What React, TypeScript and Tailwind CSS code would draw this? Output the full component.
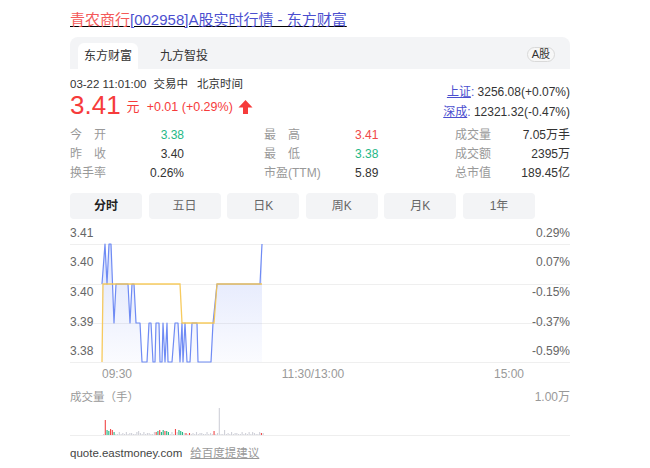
import React from "react";

const FONT = '"Liberation Sans","Noto Sans CJK SC",sans-serif';

const bluePts: [number, number][] = [
  [102, 282], [105, 242], [107, 282], [109, 242], [111, 242], [114, 321], [116, 282], [128, 282],
  [130, 321], [132, 282], [134, 282], [136, 321], [140, 321], [142, 360], [147, 360], [149, 321],
  [151, 321], [153, 360], [155, 360], [156, 321], [159, 321], [160, 360], [162, 360], [163, 321],
  [165, 360], [167, 321], [168, 360], [172, 360], [175, 321], [178, 321], [180, 360], [182, 321],
  [183, 360], [185, 321], [187, 360], [190, 360], [192, 321], [197, 321], [198, 360], [211, 360],
  [213, 321], [217, 282], [260, 282], [262, 242],
];
const yellowPts: [number, number][] = [
  [102, 360], [103, 282], [180, 282], [182, 321], [214, 321], [217, 282], [262, 282],
];

const loc = (pts: [number, number][], ox: number, oy: number) =>
  pts.map(([x, y]) => `${x - ox},${y - oy}`).join(" ");

type Bar = { h: number; c: string };
const GRAY = "#cfd0d8";
const RED = "#f04848";
const GREEN = "#25b886";
const bars: Bar[] = Array.from({ length: 92 }, (_, i) => ({
  h: [1, 2, 1, 3, 1, 2, 2, 1, 1, 3][i % 10],
  c: GRAY,
}));
const set = (i: number, h: number, c: string) => (bars[i] = { h, c });
set(1, 15, RED);
set(2, 5, GREEN);
set(3, 4, GREEN);
set(4, 6, RED);
set(5, 5, RED);
set(6, 3, GREEN);
set(20, 4, GRAY);
set(30, 3, RED);
set(31, 4, GREEN);
set(32, 5, RED);
set(33, 3, GREEN);
set(34, 5, GREEN);
set(35, 4, RED);
set(36, 4, GREEN);
set(37, 3, GREEN);
set(41, 6, RED);
set(42, 3, GRAY);
set(43, 5, GREEN);
set(44, 4, GREEN);
set(45, 3, GREEN);
set(47, 2, RED);
set(49, 2, RED);
set(63, 4, RED);
set(66, 27, GRAY);
set(69, 5, GRAY);
set(85, 3, GRAY);
set(90, 2, RED);

function Lbl({ text }: { text: string }) {
  if (text.length === 2) {
    return (
      <span className="flex w-[36px] justify-between text-[#999]">
        <span>{text[0]}</span>
        <span>{text[1]}</span>
      </span>
    );
  }
  return <span className="text-[#999] whitespace-nowrap">{text}</span>;
}

export default function App() {
  const rows = [
    { l1: "今开", v1: "3.38", c1: GREEN, l2: "最高", v2: "3.41", c2: RED, l3: "成交量", v3: "7.05万手" },
    { l1: "昨收", v1: "3.40", c1: "#333", l2: "最低", v2: "3.38", c2: GREEN, l3: "成交额", v3: "2395万" },
    { l1: "换手率", v1: "0.26%", c1: "#333", l2: "市盈(TTM)", v2: "5.89", c2: "#333", l3: "总市值", v3: "189.45亿" },
  ];
  const tabs = ["分时", "五日", "日K", "周K", "月K", "1年"];
  return (
    <div className="w-[650px] h-[468px] bg-white overflow-hidden" style={{ fontFamily: FONT }}>
      <div className="ml-[70px] w-[500px] pt-[11px]">
        {/* title */}
        <div className="text-[15px] leading-[18px] whitespace-nowrap underline">
          <span className="text-[#f45a5a]">青农商行</span>
          <span className="text-[#4b4fcf]">[002958]A股实时行情 - 东方财富</span>
        </div>

        {/* tab bar */}
        <div className="mt-[8px] h-[32px] rounded-t-[8px] bg-[#f3f4f6] flex items-end relative">
          <div className="ml-[8px] flex gap-[16px]">
            <div className="w-[60px] h-[26px] bg-white rounded-t-[6px] flex items-center justify-center text-[12px] text-[#333]">
              东方财富
            </div>
            <div className="w-[60px] h-[26px] flex items-center justify-center text-[12px] text-[#333]">
              九方智投
            </div>
          </div>
          <div className="ml-auto mr-[15px] mb-[7px] h-[15px] px-[4px] rounded-full border border-[#d9d9d9] bg-[#f7f7f7] flex items-center text-[11px] text-[#333]">
            A股
          </div>
        </div>

        {/* header */}
        <div className="flex">
          <div className="flex flex-col">
            <div className="mt-[8px] h-[14px] leading-[14px] text-[11.5px] text-[#333] whitespace-nowrap flex">
              <span>03-22 11:01:00</span>
              <span className="ml-[7px]">交易中</span>
              <span className="ml-[9px]">北京时间</span>
            </div>
            <div className="h-[28px] flex items-center text-[#f63b3b] whitespace-nowrap">
              <span className="text-[26px] leading-[28px]">3.41</span>
              <span className="ml-[6px] text-[13px] mt-[4px]">元</span>
              <span className="ml-[7px] text-[12.5px] mt-[4px]">+0.01 (+0.29%)</span>
              <svg className="ml-[5px] mt-[4px]" width="15" height="16" viewBox="0 0 15 16">
                <path d="M7.5 1 L14.5 8.5 L10 8.5 L10 15 L5 15 L5 8.5 L0.5 8.5 Z" fill="#f63b3b" />
              </svg>
            </div>
          </div>
          <div className="ml-auto flex flex-col items-end pt-[13px] text-[12px] text-[#333] whitespace-nowrap">
            <div className="h-[20px] leading-[20px]">
              <span className="text-[#4b4fcf] underline">上证</span>
              <span className="text-[#4b4fcf]">:</span> 3256.08(+0.07%)
            </div>
            <div className="h-[20px] leading-[20px]">
              <span className="text-[#4b4fcf] underline">深成</span>
              <span className="text-[#4b4fcf]">:</span> 12321.32(-0.47%)
            </div>
          </div>
        </div>

        {/* stats */}
        <div className="mt-[3px] text-[12px]">
          {rows.map((r, i) => (
            <div key={i} className="h-[19px] flex items-center">
              <div className="w-[194px] flex">
                <Lbl text={r.l1} />
                <span className="w-[78px] text-right ml-auto mr-[80px]" style={{ color: r.c1 }}>
                  {r.v1}
                </span>
              </div>
              <div className="w-[191px] flex">
                <span className="w-[91px] flex">
                  <Lbl text={r.l2} />
                </span>
                <span style={{ color: r.c2 }}>{r.v2}</span>
              </div>
              <div className="flex-1 flex">
                <Lbl text={r.l3} />
                <span className="ml-auto text-[#333]">{r.v3}</span>
              </div>
            </div>
          ))}
        </div>

        {/* period buttons */}
        <div className="mt-[11px] flex gap-[6.6px]">
          {tabs.map((t, i) => (
            <div
              key={t}
              className={
                i === 0
                  ? "w-[72px] h-[26px] rounded-[4px] bg-[#f3f4f6] flex items-center justify-center text-[12px] font-bold text-[#222]"
                  : "w-[72px] h-[26px] rounded-[4px] bg-[#f3f4f6] flex items-center justify-center text-[12px] text-[#666]"
              }
            >
              {t}
            </div>
          ))}
        </div>

        {/* price chart */}
        <svg className="block mt-[7px]" width="500" height="156" viewBox="0 0 500 156" style={{ fontFamily: FONT }}>
          <defs>
            <linearGradient id="fillg" x1="0" y1="0" x2="0" y2="1">
              <stop offset="0" stopColor="#6a86f2" stopOpacity="0.22" />
              <stop offset="1" stopColor="#6a86f2" stopOpacity="0.03" />
            </linearGradient>
          </defs>
          {[18, 58, 97, 136].map((y) => (
            <line key={y} x1="0" x2="500" y1={y + 0.5} y2={y + 0.5} stroke="#efefef" strokeWidth="1" />
          ))}
          <polygon points={loc([...bluePts, [262, 360], [102, 360]], 70, 224)} fill="url(#fillg)" />
          <polyline points={loc(bluePts, 70, 224)} fill="none" stroke="#6f8bf4" strokeWidth="1.2" strokeLinejoin="round" />
          <polyline points={loc(yellowPts, 70, 224)} fill="none" stroke="#f6c54e" strokeWidth="1.3" strokeOpacity="0.9" />
          {[
            ["3.41", "0.29%", 7],
            ["3.40", "0.07%", 36],
            ["3.40", "-0.15%", 66],
            ["3.39", "-0.37%", 96],
            ["3.38", "-0.59%", 125],
          ].map(([a, b, y]) => (
            <g key={String(y)} fontSize="12" fill="#666">
              <text x="0" y={Number(y) + 4}>{a}</text>
              <text x="500" y={Number(y) + 4} textAnchor="end">{b}</text>
            </g>
          ))}
          <g fontSize="12" fill="#999">
            <text x="32" y="152">09:30</text>
            <text x="243" y="152" textAnchor="middle">11:30/13:00</text>
            <text x="439" y="152" textAnchor="middle">15:00</text>
          </g>
        </svg>

        {/* volume chart */}
        <svg className="block" width="500" height="56" viewBox="0 0 500 56" style={{ fontFamily: FONT }}>
          <text x="0" y="19" fontSize="11.5" fill="#999">成交量（手）</text>
          <text x="500" y="19" fontSize="12" fill="#999" textAnchor="end">1.00万</text>
          <line x1="0" x2="500" y1="53.5" y2="53.5" stroke="#eeeeee" strokeWidth="1" />
          {bars.map((b, i) => (
            <rect key={i} x={33 + i * 1.754} y={53 - b.h} width="1.1" height={b.h} fill={b.c} />
          ))}
        </svg>

        {/* footer */}
        <div className="mt-[7px] h-[16px] leading-[16px] flex text-[11.5px] whitespace-nowrap">
          <span className="text-[#444]">quote.eastmoney.com</span>
          <span className="ml-[8px] text-[#999] underline">给百度提建议</span>
        </div>
      </div>
    </div>
  );
}
